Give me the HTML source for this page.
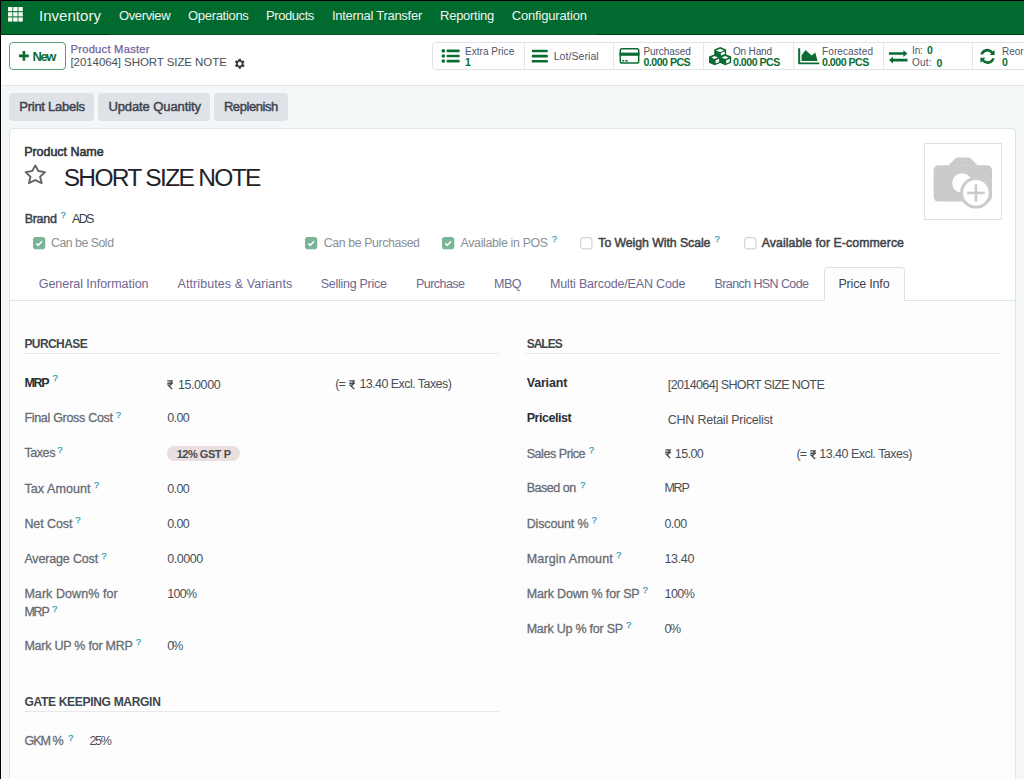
<!DOCTYPE html>
<html><head><meta charset="utf-8"><style>
html,body{margin:0;padding:0;width:1024px;height:779px;overflow:hidden;position:relative;background:#f3f7f8}
.t{position:absolute;white-space:nowrap;line-height:1;font-family:"Liberation Sans",sans-serif}
.b{position:absolute;box-sizing:border-box}
</style></head><body>
<div class="b" style="left:0px;top:0px;width:1024px;height:779px;background:#f3f7f8"></div>
<div class="b" style="left:0px;top:0px;width:1024px;height:35px;background:#016a2f"></div>
<div class="b" style="left:0px;top:34px;width:1024px;height:1px;background:#003d1a"></div>
<div class="b" style="left:110px;top:34px;width:486px;height:1px;background:#015d29"></div>
<div class="b" style="left:0px;top:0px;width:1024px;height:1px;background:#000"></div>
<svg class="b" style="left:0;top:0" width="30" height="30"><rect x="8.00" y="7.00" width="4.4" height="4.2" fill="#f4fbf4"/><rect x="13.20" y="7.00" width="4.4" height="4.2" fill="#f4fbf4"/><rect x="18.40" y="7.00" width="4.4" height="4.2" fill="#f4fbf4"/><rect x="8.00" y="12.20" width="4.4" height="4.2" fill="#f4fbf4"/><rect x="13.20" y="12.20" width="4.4" height="4.2" fill="#f4fbf4"/><rect x="18.40" y="12.20" width="4.4" height="4.2" fill="#f4fbf4"/><rect x="8.00" y="17.40" width="4.4" height="4.2" fill="#f4fbf4"/><rect x="13.20" y="17.40" width="4.4" height="4.2" fill="#f4fbf4"/><rect x="18.40" y="17.40" width="4.4" height="4.2" fill="#f4fbf4"/></svg>
<div class="t" style="left:39.00px;top:7.70px;font-size:15px;color:#eef5ee;letter-spacing:0.034px;">Inventory</div>
<div class="t" style="left:119.00px;top:8.90px;font-size:13px;color:#eef5ee;letter-spacing:-0.373px;">Overview</div>
<div class="t" style="left:188.00px;top:8.90px;font-size:13px;color:#eef5ee;letter-spacing:-0.308px;">Operations</div>
<div class="t" style="left:266.00px;top:8.90px;font-size:13px;color:#eef5ee;letter-spacing:-0.426px;">Products</div>
<div class="t" style="left:331.90px;top:8.90px;font-size:13px;color:#eef5ee;letter-spacing:-0.271px;">Internal Transfer</div>
<div class="t" style="left:440.10px;top:8.90px;font-size:13px;color:#eef5ee;letter-spacing:-0.282px;">Reporting</div>
<div class="t" style="left:511.80px;top:8.90px;font-size:13px;color:#eef5ee;letter-spacing:-0.179px;">Configuration</div>
<div class="b" style="left:1px;top:35px;width:1023px;height:50px;background:#fff"></div>
<div class="b" style="left:1px;top:85px;width:1023px;height:1px;background:#e3e6ea"></div>
<div class="b" style="left:0px;top:0px;width:1px;height:779px;background:#000"></div>
<div class="b" style="left:9px;top:42px;width:57px;height:28px;border:1px solid #5b9c74;border-radius:4px;background:#fff"></div>
<svg class="b" style="left:18.8px;top:50.8px" width="10" height="10"><path d="M3.6 0h2.6v3.6h3.6v2.6h-3.6v3.6h-2.6v-3.6h-3.6v-2.6h3.6z" fill="#0b6b33"/></svg>
<div class="t" style="left:32.40px;top:49.60px;font-size:13px;color:#0b6b33;font-weight:700;letter-spacing:-1.340px;">New</div>
<div class="t" style="left:70.50px;top:44.22px;font-size:11.2px;color:#71639e;letter-spacing:0.243px;-webkit-text-stroke:0.25px #71639e;">Product Master</div>
<div class="t" style="left:70.50px;top:56.87px;font-size:11.5px;color:#495057;letter-spacing:-0.074px;">[2014064] SHORT SIZE NOTE</div>
<svg class="b" style="left:232.6px;top:56.6px" width="13.5" height="13.5" viewBox="0 0 24 24"><path fill="#343a40" d="M19.4 13a7.5 7.5 0 0 0 0-2l2.1-1.6-2-3.5-2.5 1a7.6 7.6 0 0 0-1.7-1L15 3h-4l-.4 2.7a7.6 7.6 0 0 0-1.7 1l-2.5-1-2 3.5L6.6 11a7.5 7.5 0 0 0 0 2l-2.1 1.6 2 3.5 2.5-1a7.6 7.6 0 0 0 1.7 1L11 21h4l.4-2.7a7.6 7.6 0 0 0 1.7-1l2.5 1 2-3.5zM13 15.5a3.5 3.5 0 1 1 0-7 3.5 3.5 0 0 1 0 7z" transform="translate(-1 0)"/></svg>
<div class="b" style="left:432px;top:42px;width:620px;height:28px;border:1px solid #dfe3e8;border-radius:4px;background:#fff"></div>
<div class="b" style="left:524px;top:43px;width:1px;height:26px;background:#e2e5e9"></div>
<div class="b" style="left:613px;top:43px;width:1px;height:26px;background:#e2e5e9"></div>
<div class="b" style="left:702.5px;top:43px;width:1px;height:26px;background:#e2e5e9"></div>
<div class="b" style="left:792.5px;top:43px;width:1px;height:26px;background:#e2e5e9"></div>
<div class="b" style="left:882.5px;top:43px;width:1px;height:26px;background:#e2e5e9"></div>
<div class="b" style="left:972px;top:43px;width:1px;height:26px;background:#e2e5e9"></div>
<svg class="b" style="left:436px;top:44px" width="30" height="24"><circle cx="7.3" cy="6.9" r="1.8" fill="#0b6b33"/><rect x="10.5" y="5.6" width="13.2" height="2.6" rx="1" fill="#0b6b33"/><circle cx="7.3" cy="12.0" r="1.8" fill="#0b6b33"/><rect x="10.5" y="10.7" width="13.2" height="2.6" rx="1" fill="#0b6b33"/><circle cx="7.3" cy="17.1" r="1.8" fill="#0b6b33"/><rect x="10.5" y="15.8" width="13.2" height="2.6" rx="1" fill="#0b6b33"/></svg>
<div class="t" style="left:465.00px;top:46.84px;font-size:10px;color:#4f5368;letter-spacing:0.030px;">Extra Price</div>
<div class="t" style="left:465.00px;top:56.61px;font-size:10.5px;color:#0b6b33;font-weight:700;">1</div>
<svg class="b" style="left:524px;top:44px" width="30" height="24"><rect x="7.7" y="5.7" width="16.2" height="2.6" rx="1.2" fill="#0b6b33"/><rect x="7.7" y="10.8" width="16.2" height="2.6" rx="1.2" fill="#0b6b33"/><rect x="7.7" y="16.0" width="16.2" height="2.6" rx="1.2" fill="#0b6b33"/></svg>
<div class="t" style="left:553.70px;top:51.11px;font-size:10.5px;color:#4f5368;letter-spacing:0.071px;">Lot/Serial</div>
<svg class="b" style="left:613px;top:44px" width="30" height="24"><rect x="7.3" y="4.8" width="18.4" height="14.3" rx="1.8" fill="none" stroke="#0b6b33" stroke-width="1.5"/><rect x="6.5" y="8.6" width="20" height="3.2" fill="#0b6b33"/><rect x="9" y="16.2" width="2.2" height="1.3" fill="#0b6b33"/><rect x="12" y="16.2" width="3" height="1.3" fill="#0b6b33"/></svg>
<div class="t" style="left:643.40px;top:46.84px;font-size:10px;color:#4f5368;letter-spacing:-0.050px;">Purchased</div>
<div class="t" style="left:643.40px;top:56.53px;font-size:10.6px;color:#0b6b33;font-weight:700;letter-spacing:-0.494px;">0.000 PCS</div>
<svg class="b" style="left:704px;top:44px" width="30" height="24"><path fill="#0b6b33" d="M16.2 3.1 L22.2 5.6 L22.2 10.6 L27.2 12.6 L27.2 18.7 L21.3 21.2 L16.2 19 L10.6 21.2 L5 18.7 L5 12.6 L10.2 10.6 L10.2 5.6 Z"/><g fill="#fff"><path d="M12 6.5 L16.1 4.7 L20.1 6.5 L16.1 8.3 Z"/><path d="M16.9 8.9 L20.8 7.4 L20.8 10.1 L16.9 11.6 Z"/><path d="M7.5 13.5 L10.5 12.1 L14 13.5 L10.5 15 Z"/><path d="M11.6 16.2 L15.1 14.8 L15.1 17.9 L11.6 19.4 Z"/><path d="M17.6 13.5 L21.1 12 L24.6 13.5 L21.1 15 Z"/><path d="M22.2 16.2 L25.7 14.8 L25.7 17.9 L22.2 19.4 Z"/></g></svg>
<div class="t" style="left:733.00px;top:46.84px;font-size:10px;color:#4f5368;letter-spacing:-0.175px;">On Hand</div>
<div class="t" style="left:733.00px;top:56.53px;font-size:10.6px;color:#0b6b33;font-weight:700;letter-spacing:-0.494px;">0.000 PCS</div>
<svg class="b" style="left:794px;top:44px" width="30" height="24"><path d="M4.2 4.2h2v14.4h19.1v1.6H4.2z" fill="#0b6b33"/><path d="M7.6 11.3 L11.6 6.1 L17.6 11.5 L21.3 8.6 L23.5 17 L7.6 17 Z" fill="#0b6b33"/></svg>
<div class="t" style="left:822.00px;top:46.84px;font-size:10px;color:#4f5368;letter-spacing:0.106px;">Forecasted</div>
<div class="t" style="left:822.00px;top:56.53px;font-size:10.6px;color:#0b6b33;font-weight:700;letter-spacing:-0.494px;">0.000 PCS</div>
<svg class="b" style="left:884px;top:44px" width="30" height="24"><path d="M4.9 8.3h14.5v-2.1l4 3.3-4 3.4v-2.1H4.9z" fill="#0b6b33"/><path d="M23.5 14.8H9v-2.1l-4 3.4 4 3.4v-2.1h14.5z" fill="#0b6b33"/></svg>
<div class="t" style="left:912.00px;top:45.93px;font-size:10px;color:#4f5368;letter-spacing:-0.150px;">In:</div>
<div class="t" style="left:927.00px;top:45.11px;font-size:10.5px;color:#0b6b33;font-weight:700;">0</div>
<div class="t" style="left:912.00px;top:58.34px;font-size:10px;color:#4f5368;letter-spacing:0.200px;">Out:</div>
<div class="t" style="left:936.50px;top:57.71px;font-size:10.5px;color:#0b6b33;font-weight:700;">0</div>
<svg class="b" style="left:972px;top:40px" width="30" height="30"><path d="M8.4 14.6 A7 7 0 0 1 20.8 11.6 L22.6 10 V15 H17.6 L19.2 13.4 A5 5 0 0 0 10.8 14.6 Z" fill="#0b6b33"/><path d="M22.6 18.2 A7 7 0 0 1 10.2 21.2 L8.4 22.8 V17.8 H13.4 L11.8 19.4 A5 5 0 0 0 20.2 18.2 Z" fill="#0b6b33"/></svg>
<div class="t" style="left:1002.00px;top:47.04px;font-size:10px;color:#4f5368;">Reordering</div>
<div class="t" style="left:1002.00px;top:56.71px;font-size:10.5px;color:#0b6b33;font-weight:700;">0</div>
<div class="b" style="left:9.4px;top:93.3px;width:84.89999999999999px;height:27.3px;background:#dfe2e6;border-radius:4px"></div>
<div class="b" style="left:98.2px;top:93.3px;width:111.8px;height:27.3px;background:#dfe2e6;border-radius:4px"></div>
<div class="b" style="left:214.2px;top:93.3px;width:73.5px;height:27.3px;background:#dfe2e6;border-radius:4px"></div>
<div class="t" style="left:19.30px;top:99.90px;font-size:13px;color:#3d4350;letter-spacing:-0.267px;-webkit-text-stroke:0.45px #3d4350;">Print Labels</div>
<div class="t" style="left:108.40px;top:99.90px;font-size:13px;color:#3d4350;letter-spacing:-0.095px;-webkit-text-stroke:0.45px #3d4350;">Update Quantity</div>
<div class="t" style="left:223.90px;top:99.90px;font-size:13px;color:#3d4350;letter-spacing:-0.423px;-webkit-text-stroke:0.45px #3d4350;">Replenish</div>
<div class="b" style="left:9px;top:128px;width:1007px;height:700px;border:1px solid #e0e3e7;border-radius:4px;background:#fff"></div>
<div class="b" style="left:10px;top:301px;width:1005px;height:480px;background:#fdfdfd"></div>
<div class="t" style="left:24.20px;top:145.52px;font-size:12.5px;color:#30353c;letter-spacing:-0.043px;-webkit-text-stroke:0.55px #30353c;">Product Name</div>
<svg class="b" style="left:20px;top:160px" width="30" height="30"><path d="M15.3 5.4 L18.3 11 L25 12.1 L20.1 16.8 L21.7 23.2 L15.3 20.2 L8.9 23.2 L10.5 16.8 L5.6 12.1 L12.3 11 Z" fill="none" stroke="#62666c" stroke-width="1.9" stroke-linejoin="round"/></svg>
<div class="t" style="left:63.70px;top:165.66px;font-size:24.5px;color:#1f2328;letter-spacing:-1.671px;">SHORT SIZE NOTE</div>
<div class="b" style="left:924px;top:143px;width:78px;height:77px;border:1px solid #dde1e5;background:#fff"></div>
<svg class="b" style="left:924px;top:143px" width="78" height="77"><rect x="9.6" y="22.2" width="58.4" height="36.4" rx="5" fill="#cacccb"/><path d="M24.2 22.6 L32.3 14.4 L45.8 14.4 L53.8 22.6 Z" fill="#cacccb"/><circle cx="38" cy="40" r="9.8" fill="#fff"/><circle cx="51.9" cy="49.9" r="15.8" fill="#cacccb"/><circle cx="51.9" cy="49.9" r="12.8" fill="#fff"/><rect x="43.1" y="48.6" width="17.6" height="2.6" fill="#cacccb"/><rect x="50.6" y="41.1" width="2.6" height="17.6" fill="#cacccb"/></svg>
<div class="t" style="left:24.70px;top:212.72px;font-size:12.5px;color:#3f444b;letter-spacing:-0.294px;-webkit-text-stroke:0.5px #3f444b;">Brand</div>
<div class="t" style="left:60.70px;top:211.48px;font-size:9px;color:#3199b5;-webkit-text-stroke:0.25px #3199b5;">?</div>
<div class="t" style="left:72.00px;top:212.72px;font-size:12.5px;color:#3a3f46;letter-spacing:-1.644px;">ADS</div>
<svg class="b" style="left:32.7px;top:237px" width="13" height="13"><rect x="0" y="0" width="12.3" height="12.2" rx="2.8" fill="#7ab497"/><path d="M3.3 6.4 L5.2 8.3 L9.2 4.3" fill="none" stroke="#fff" stroke-width="1.6"/></svg>
<div class="t" style="left:51.00px;top:237.19px;font-size:12.3px;color:#8a8f96;letter-spacing:-0.471px;">Can be Sold</div>
<svg class="b" style="left:305.3px;top:237px" width="13" height="13"><rect x="0" y="0" width="12.3" height="12.2" rx="2.8" fill="#7ab497"/><path d="M3.3 6.4 L5.2 8.3 L9.2 4.3" fill="none" stroke="#fff" stroke-width="1.6"/></svg>
<div class="t" style="left:323.75px;top:237.19px;font-size:12.3px;color:#8a8f96;letter-spacing:-0.377px;">Can be Purchased</div>
<svg class="b" style="left:441.9px;top:237px" width="13" height="13"><rect x="0" y="0" width="12.3" height="12.2" rx="2.8" fill="#7ab497"/><path d="M3.3 6.4 L5.2 8.3 L9.2 4.3" fill="none" stroke="#fff" stroke-width="1.6"/></svg>
<div class="t" style="left:460.60px;top:237.19px;font-size:12.3px;color:#8a8f96;letter-spacing:-0.311px;">Available in POS</div>
<div class="t" style="left:552.00px;top:235.48px;font-size:9px;color:#3199b5;-webkit-text-stroke:0.25px #3199b5;">?</div>
<svg class="b" style="left:580.2px;top:237px" width="13" height="13"><rect x="0.6" y="0.6" width="11.3" height="11.3" rx="2.6" fill="#fff" stroke="#d2d5d9" stroke-width="1.2"/></svg>
<div class="t" style="left:598.30px;top:237.19px;font-size:12.3px;color:#3f444b;letter-spacing:-0.060px;-webkit-text-stroke:0.5px #3f444b;">To Weigh With Scale</div>
<div class="t" style="left:714.70px;top:235.48px;font-size:9px;color:#3199b5;-webkit-text-stroke:0.25px #3199b5;">?</div>
<svg class="b" style="left:743.8px;top:237px" width="13" height="13"><rect x="0.6" y="0.6" width="11.3" height="11.3" rx="2.6" fill="#fff" stroke="#d2d5d9" stroke-width="1.2"/></svg>
<div class="t" style="left:761.70px;top:237.19px;font-size:12.3px;color:#3f444b;letter-spacing:0.074px;-webkit-text-stroke:0.5px #3f444b;">Available for E-commerce</div>
<div class="b" style="left:10px;top:300px;width:1005px;height:1px;background:#dee2e6"></div>
<div class="b" style="left:824px;top:267px;width:80.5px;height:34px;border:1px solid #dee2e6;border-bottom:none;border-radius:4px 4px 0 0;background:#fdfdfd"></div>
<div class="t" style="left:38.70px;top:277.72px;font-size:12.5px;color:#6d6891;letter-spacing:-0.033px;">General Information</div>
<div class="t" style="left:177.60px;top:277.72px;font-size:12.5px;color:#6d6891;letter-spacing:0.080px;">Attributes &amp; Variants</div>
<div class="t" style="left:320.70px;top:277.72px;font-size:12.5px;color:#6d6891;letter-spacing:-0.267px;">Selling Price</div>
<div class="t" style="left:416.00px;top:277.72px;font-size:12.5px;color:#6d6891;letter-spacing:-0.545px;">Purchase</div>
<div class="t" style="left:494.00px;top:277.72px;font-size:12.5px;color:#6d6891;letter-spacing:-0.500px;">MBQ</div>
<div class="t" style="left:550.00px;top:277.72px;font-size:12.5px;color:#6d6891;letter-spacing:-0.164px;">Multi Barcode/EAN Code</div>
<div class="t" style="left:714.50px;top:277.72px;font-size:12.5px;color:#6d6891;letter-spacing:-0.594px;">Branch HSN Code</div>
<div class="t" style="left:838.40px;top:277.72px;font-size:12.5px;color:#3e444c;letter-spacing:-0.179px;">Price Info</div>
<div class="t" style="left:24.40px;top:337.84px;font-size:12px;color:#40464e;font-weight:700;letter-spacing:-0.574px;">PURCHASE</div>
<div class="b" style="left:24px;top:353px;width:474.6px;height:1px;background:#e6e8eb"></div>
<div class="t" style="left:526.70px;top:337.84px;font-size:12px;color:#40464e;font-weight:700;letter-spacing:-1.005px;">SALES</div>
<div class="b" style="left:526px;top:353px;width:475px;height:1px;background:#e6e8eb"></div>
<div class="t" style="left:24.40px;top:376.82px;font-size:12.5px;color:#2b2f36;font-weight:700;letter-spacing:-1.275px;">MRP</div>
<div class="t" style="left:52.70px;top:373.78px;font-size:9px;color:#3199b5;-webkit-text-stroke:0.25px #3199b5;">?</div>
<svg class="b" style="left:167.1px;top:379.8px" width="8" height="10"><path d="M0.3 0.8 H6 M0.3 3.2 H6 M1 0.8 H2.4 C5.1 0.8 5.1 5.1 2.4 5.1 H1 L5.2 9.1" fill="none" stroke="#4a4f56" stroke-width="1.35"/></svg>
<div class="t" style="left:178.00px;top:378.52px;font-size:12.5px;color:#4a4f56;letter-spacing:-0.431px;">15.0000</div>
<div class="t" style="left:335.20px;top:378.22px;font-size:12.5px;color:#4a4f56;letter-spacing:-0.938px;">(=</div>
<svg class="b" style="left:349.0px;top:379.6px" width="8" height="10"><path d="M0.3 0.8 H6 M0.3 3.2 H6 M1 0.8 H2.4 C5.1 0.8 5.1 5.1 2.4 5.1 H1 L5.2 9.1" fill="none" stroke="#4a4f56" stroke-width="1.35"/></svg>
<div class="t" style="left:359.40px;top:378.22px;font-size:12.5px;color:#4a4f56;letter-spacing:-0.555px;">13.40 Excl. Taxes)</div>
<div class="t" style="left:24.40px;top:412.32px;font-size:12.5px;color:#666b72;letter-spacing:-0.298px;-webkit-text-stroke:0.28px #666b72;">Final Gross Cost</div>
<div class="t" style="left:116.10px;top:410.68px;font-size:9px;color:#3199b5;-webkit-text-stroke:0.25px #3199b5;">?</div>
<div class="t" style="left:167.30px;top:412.32px;font-size:12.5px;color:#4a4f56;letter-spacing:-0.671px;">0.00</div>
<div class="t" style="left:24.40px;top:447.42px;font-size:12.5px;color:#666b72;letter-spacing:-0.406px;-webkit-text-stroke:0.28px #666b72;">Taxes</div>
<div class="t" style="left:57.60px;top:445.78px;font-size:9px;color:#3199b5;-webkit-text-stroke:0.25px #3199b5;">?</div>
<div class="b" style="left:166.9px;top:445.7px;width:73.1px;height:15.7px;background:#e9dfdf;border-radius:8px"></div>
<div class="t" style="left:176.70px;top:448.69px;font-size:11px;color:#474c53;font-weight:700;letter-spacing:-0.473px;">12% GST P</div>
<div class="t" style="left:24.40px;top:482.62px;font-size:12.5px;color:#666b72;letter-spacing:0.087px;-webkit-text-stroke:0.28px #666b72;">Tax Amount</div>
<div class="t" style="left:93.90px;top:480.98px;font-size:9px;color:#3199b5;-webkit-text-stroke:0.25px #3199b5;">?</div>
<div class="t" style="left:167.30px;top:482.62px;font-size:12.5px;color:#4a4f56;letter-spacing:-0.671px;">0.00</div>
<div class="t" style="left:24.40px;top:517.72px;font-size:12.5px;color:#666b72;letter-spacing:-0.089px;-webkit-text-stroke:0.28px #666b72;">Net Cost</div>
<div class="t" style="left:75.60px;top:516.08px;font-size:9px;color:#3199b5;-webkit-text-stroke:0.25px #3199b5;">?</div>
<div class="t" style="left:167.30px;top:517.72px;font-size:12.5px;color:#4a4f56;letter-spacing:-0.671px;">0.00</div>
<div class="t" style="left:24.40px;top:553.42px;font-size:12.5px;color:#666b72;letter-spacing:-0.155px;-webkit-text-stroke:0.28px #666b72;">Average Cost</div>
<div class="t" style="left:101.40px;top:551.78px;font-size:9px;color:#3199b5;-webkit-text-stroke:0.25px #3199b5;">?</div>
<div class="t" style="left:167.30px;top:553.42px;font-size:12.5px;color:#4a4f56;letter-spacing:-0.470px;">0.0000</div>
<div class="t" style="left:24.40px;top:588.02px;font-size:12.5px;color:#666b72;letter-spacing:0.063px;-webkit-text-stroke:0.28px #666b72;">Mark Down% for</div>
<div class="t" style="left:24.40px;top:606.22px;font-size:12.5px;color:#666b72;letter-spacing:-1.225px;-webkit-text-stroke:0.28px #666b72;">MRP</div>
<div class="t" style="left:52.20px;top:604.58px;font-size:9px;color:#3199b5;-webkit-text-stroke:0.25px #3199b5;">?</div>
<div class="t" style="left:167.30px;top:588.02px;font-size:12.5px;color:#4a4f56;letter-spacing:-0.733px;">100%</div>
<div class="t" style="left:24.40px;top:639.72px;font-size:12.5px;color:#666b72;letter-spacing:-0.238px;-webkit-text-stroke:0.28px #666b72;">Mark UP % for MRP</div>
<div class="t" style="left:136.10px;top:638.08px;font-size:9px;color:#3199b5;-webkit-text-stroke:0.25px #3199b5;">?</div>
<div class="t" style="left:167.30px;top:639.72px;font-size:12.5px;color:#4a4f56;letter-spacing:-2.062px;">0%</div>
<div class="t" style="left:24.40px;top:695.74px;font-size:12px;color:#40464e;font-weight:700;letter-spacing:-0.299px;">GATE KEEPING MARGIN</div>
<div class="b" style="left:24px;top:710.5px;width:474.6px;height:1px;background:#e6e8eb"></div>
<div class="t" style="left:24.40px;top:735.22px;font-size:12.5px;color:#666b72;letter-spacing:-0.941px;-webkit-text-stroke:0.28px #666b72;">GKM %</div>
<div class="t" style="left:68.20px;top:733.58px;font-size:9px;color:#3199b5;-webkit-text-stroke:0.25px #3199b5;">?</div>
<div class="t" style="left:89.50px;top:735.22px;font-size:12.5px;color:#4a4f56;letter-spacing:-1.350px;">25%</div>
<div class="t" style="left:526.70px;top:376.92px;font-size:12.5px;color:#2b2f36;font-weight:700;letter-spacing:-0.181px;">Variant</div>
<div class="t" style="left:667.80px;top:379.42px;font-size:12.5px;color:#4a4f56;letter-spacing:-0.621px;">[2014064] SHORT SIZE NOTE</div>
<div class="t" style="left:526.70px;top:412.22px;font-size:12.5px;color:#2b2f36;font-weight:700;letter-spacing:-0.466px;">Pricelist</div>
<div class="t" style="left:667.80px;top:414.42px;font-size:12.5px;color:#4a4f56;letter-spacing:-0.239px;">CHN Retail Pricelist</div>
<div class="t" style="left:526.70px;top:447.82px;font-size:12.5px;color:#666b72;letter-spacing:-0.435px;-webkit-text-stroke:0.28px #666b72;">Sales Price</div>
<div class="t" style="left:589.00px;top:446.18px;font-size:9px;color:#3199b5;-webkit-text-stroke:0.25px #3199b5;">?</div>
<svg class="b" style="left:665.0px;top:449.4px" width="8" height="10"><path d="M0.3 0.8 H6 M0.3 3.2 H6 M1 0.8 H2.4 C5.1 0.8 5.1 5.1 2.4 5.1 H1 L5.2 9.1" fill="none" stroke="#4a4f56" stroke-width="1.35"/></svg>
<div class="t" style="left:674.80px;top:448.22px;font-size:12.5px;color:#4a4f56;letter-spacing:-0.578px;">15.00</div>
<div class="t" style="left:796.60px;top:448.22px;font-size:12.5px;color:#4a4f56;letter-spacing:-0.938px;">(=</div>
<svg class="b" style="left:809.8px;top:449.6px" width="8" height="10"><path d="M0.3 0.8 H6 M0.3 3.2 H6 M1 0.8 H2.4 C5.1 0.8 5.1 5.1 2.4 5.1 H1 L5.2 9.1" fill="none" stroke="#4a4f56" stroke-width="1.35"/></svg>
<div class="t" style="left:819.30px;top:448.22px;font-size:12.5px;color:#4a4f56;letter-spacing:-0.520px;">13.40 Excl. Taxes)</div>
<div class="t" style="left:526.70px;top:482.22px;font-size:12.5px;color:#666b72;letter-spacing:-0.459px;-webkit-text-stroke:0.28px #666b72;">Based on</div>
<div class="t" style="left:580.20px;top:480.58px;font-size:9px;color:#3199b5;-webkit-text-stroke:0.25px #3199b5;">?</div>
<div class="t" style="left:664.40px;top:482.22px;font-size:12.5px;color:#4a4f56;letter-spacing:-1.225px;">MRP</div>
<div class="t" style="left:526.70px;top:517.52px;font-size:12.5px;color:#666b72;letter-spacing:-0.139px;-webkit-text-stroke:0.28px #666b72;">Discount %</div>
<div class="t" style="left:591.70px;top:515.88px;font-size:9px;color:#3199b5;-webkit-text-stroke:0.25px #3199b5;">?</div>
<div class="t" style="left:664.40px;top:517.52px;font-size:12.5px;color:#4a4f56;letter-spacing:-0.504px;">0.00</div>
<div class="t" style="left:526.70px;top:552.52px;font-size:12.5px;color:#666b72;letter-spacing:0.170px;-webkit-text-stroke:0.28px #666b72;">Margin Amount</div>
<div class="t" style="left:616.20px;top:550.88px;font-size:9px;color:#3199b5;-webkit-text-stroke:0.25px #3199b5;">?</div>
<div class="t" style="left:664.40px;top:552.52px;font-size:12.5px;color:#4a4f56;letter-spacing:-0.328px;">13.40</div>
<div class="t" style="left:526.70px;top:587.82px;font-size:12.5px;color:#666b72;letter-spacing:-0.176px;-webkit-text-stroke:0.28px #666b72;">Mark Down % for SP</div>
<div class="t" style="left:642.70px;top:586.18px;font-size:9px;color:#3199b5;-webkit-text-stroke:0.25px #3199b5;">?</div>
<div class="t" style="left:664.40px;top:587.82px;font-size:12.5px;color:#4a4f56;letter-spacing:-0.467px;">100%</div>
<div class="t" style="left:526.70px;top:622.82px;font-size:12.5px;color:#666b72;letter-spacing:-0.240px;-webkit-text-stroke:0.28px #666b72;">Mark Up % for SP</div>
<div class="t" style="left:626.20px;top:621.18px;font-size:9px;color:#3199b5;-webkit-text-stroke:0.25px #3199b5;">?</div>
<div class="t" style="left:664.40px;top:622.82px;font-size:12.5px;color:#4a4f56;letter-spacing:-1.462px;">0%</div>
</body></html>
